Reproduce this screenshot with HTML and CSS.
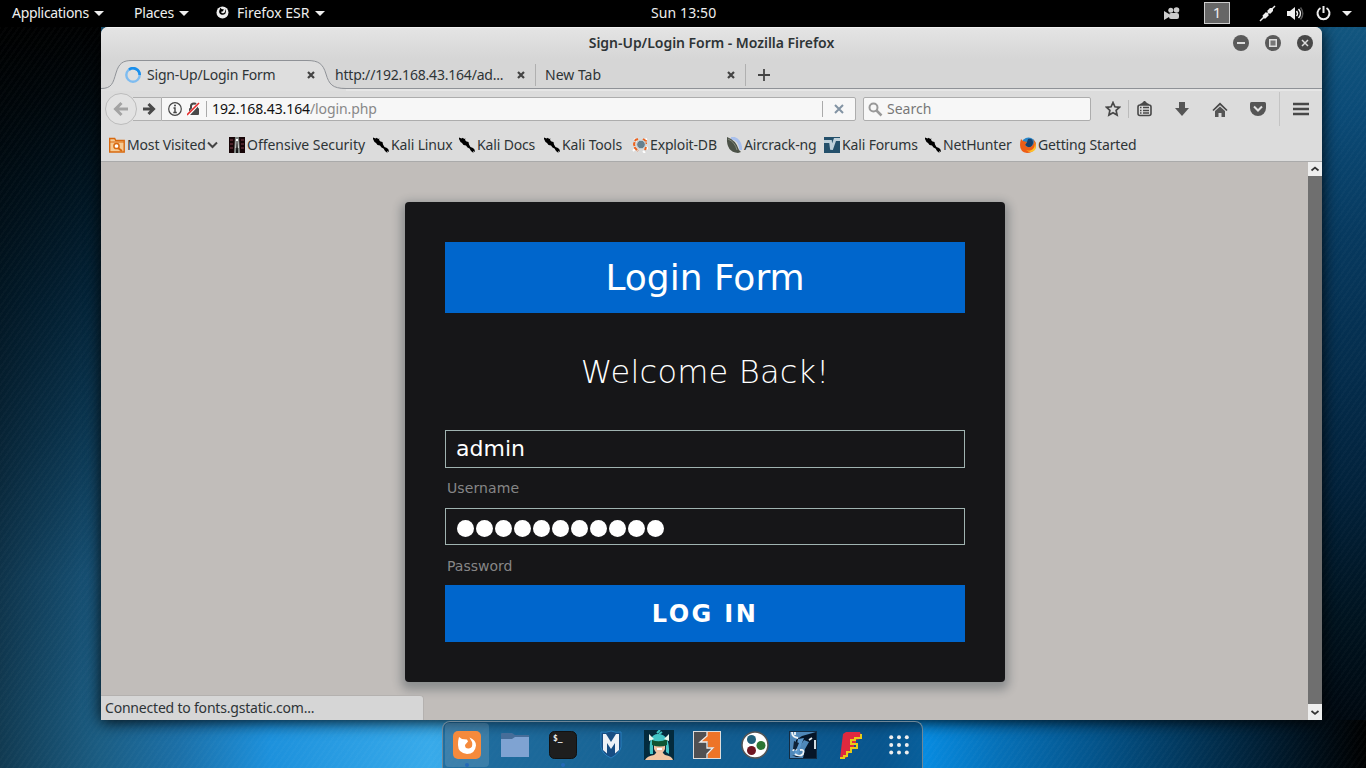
FILE: index.html
```html
<!DOCTYPE html>
<html lang="en">
<head>
<meta charset="utf-8">
<title>Sign-Up/Login Form</title>
<link rel="stylesheet" href="styles.css">
</head>
<body>
<svg width="0" height="0" class="defs">
  <defs>
    <symbol id="kali" viewBox="0 0 16 16"><path d="M0 .5l2.500 1L4 .8 5 2 6.500 1.500 6 3l1.500 1.500L9.500 5l.5 2.500L11.500 10l2.500 1 1.500 1.500.5 2.500-2-1 .5 2-2.500-2-1.500-2.500-2-1L7 8.500 4.500 8 3 6 1.500 5 0 2z" fill="#000"/></symbol>
    <symbol id="close" viewBox="0 0 8 8"><path d="M1 1l6 6M7 1L1 7" stroke="#444" stroke-width="2.200"/></symbol>
  </defs>
</svg>
<div class="desktop">
  <header class="panel">
    <span class="menu m-app">Applications<i class="tri"></i></span>
    <span class="menu m-places">Places<i class="tri"></i></span>
    <span class="menu m-fox"><svg width="13" height="13" viewBox="0 0 13 13"><circle cx="6.500" cy="6.500" r="6" fill="#eee"/><path d="M4.500 1.500l1 1.500 2.500.5-1.500 2-1.500.3q.8 2.200 3 1.200 2-1.500.8-4.500 2.200 2.500.7 5-2 2-4.500 1Q2.500 7 3.300 4.500z" fill="#000"/></svg><b>Firefox ESR</b><i class="tri"></i></span>
    <span class="clock">Sun 13:50</span>
    <div class="tray">
      <svg width="16" height="13" viewBox="0 0 16 13" fill="#ccc"><circle cx="6.800" cy="3.200" r="2.500"/><circle cx="12.500" cy="3" r="2.800"/><rect x="5" y="6" width="10" height="6" rx="2"/><path d="M0 4l5 3v3l-5 3z"/></svg>
      <span class="workspace">1</span>
      <svg class="t-net" width="17" height="17" viewBox="0 0 17 17"><path d="M1 16L16 1" stroke="#eee" stroke-width="1.500"/><path d="M3.500 10.500l3.500-3.500 3 3-3.500 3.500h-2zM8 6l3-3h3v3l-3 3z" fill="#eee"/></svg>
      <svg class="t-vol" width="17" height="15" viewBox="0 0 17 15"><path d="M0 5h3l5-4v13L3 10H0z" fill="#eee"/><path d="M9.500 5q2 2.500 0 5M11.500 3q4 4.500 0 9" fill="none" stroke="#eee" stroke-width="1.500"/><path d="M13.500 1.500q4.500 6 0 12" fill="none" stroke="#555" stroke-width="1.500"/></svg>
      <svg class="t-pow" width="15" height="16" viewBox="0 0 15 16"><path d="M4.500 3a6 6 0 1 0 6 0M7.500 1v7" fill="none" stroke="#eee" stroke-width="2"/></svg>
      <i class="tri"></i>
    </div>
  </header>

  <main class="window">
    <div class="titlebar">
      <span class="title">Sign-Up/Login Form - Mozilla Firefox</span>
      <div class="controls">
        <svg width="16" height="16" viewBox="0 0 16 16"><circle cx="8" cy="8" r="8" fill="#5a5a5a"/><path d="M4 8h8" stroke="#ddd" stroke-width="2"/></svg>
        <svg width="16" height="16" viewBox="0 0 16 16"><circle cx="8" cy="8" r="8" fill="#5a5a5a"/><rect x="4.750" y="4.750" width="6.500" height="6.500" fill="#777" stroke="#ddd" stroke-width="1.500"/></svg>
        <svg width="16" height="16" viewBox="0 0 16 16"><circle cx="8" cy="8" r="8" fill="#484848"/><path d="M5 5l6 6M11 5l-6 6" stroke="#ddd" stroke-width="1.500"/></svg>
      </div>
    </div>

    <div class="tabs">
      <div class="tab active">
        <svg class="tab-shape" width="245" height="32" viewBox="0 0 245 32"><path d="M0 31V29.500C11 29.500 12 24 15 14 18 4 22 1.500 31 1.500H206C218 1.500 222 5 225 15 228 25 231 29.500 245 29.500V32H0z" fill="#dedede"/><path d="M0 29.500C11 29.500 12 24 15 14 18 4 22 1.500 31 1.500H206C218 1.500 222 5 225 15 228 25 231 29.500 245 29.500" fill="none" stroke="#8f9297"/></svg>
        <svg class="spinner" width="16" height="16" viewBox="0 0 16 16"><circle cx="8" cy="8" r="6.700" fill="none" stroke="#7ebcf0" stroke-width="2.400"/><path d="M4 2.600A6.700 6.700 0 0 1 14.700 8" fill="none" stroke="#1a8fec" stroke-width="2.600"/></svg>
        <span class="tab-label l1">Sign-Up/Login Form</span><svg class="x x1" width="8" height="8"><use href="#close"/></svg>
      </div>
      <div class="tab second"><span class="tab-label l2">http://192.168.43.164/ad...</span><svg class="x" width="8" height="8"><use href="#close"/></svg></div>
      <div class="tab third"><span class="tab-label l3">New Tab</span><svg class="x" width="8" height="8"><use href="#close"/></svg></div>
      <svg class="plus" width="12" height="12" viewBox="0 0 12 12"><path d="M6 0v12M0 6h12" stroke="#444" stroke-width="1.800"/></svg>
    </div>

    <div class="navbar">
      <div class="back"><svg width="16" height="16" viewBox="0 0 16 16"><path d="M15 8H4M8.500 2L2.500 8l6 6" fill="none" stroke="#a3a3a3" stroke-width="3"/></svg></div>
      <div class="forward"><svg width="14" height="14" viewBox="0 0 14 14"><path d="M1 7h9M6.500 2l5 5-5 5" fill="none" stroke="#484848" stroke-width="3"/></svg></div>
      <div class="urlbox">
        <svg width="14" height="14" viewBox="0 0 14 14"><circle cx="7" cy="7" r="6.300" fill="none" stroke="#444" stroke-width="1.200"/><path d="M5.500 6H7v4.500M5.300 10.500h3.500" fill="none" stroke="#444" stroke-width="1.400"/><circle cx="7" cy="3.500" r="1" fill="#444"/></svg>
        <svg class="lock" width="13" height="14" viewBox="0 0 13 14"><rect x="2" y="6" width="10" height="7" rx="1" fill="#484848"/><path d="M4 7V4q0-2.500 3-2.500T10 4v3" fill="none" stroke="#484848" stroke-width="2"/><path d="M1 13L12 1" stroke="#fff" stroke-width="3"/><path d="M0 13L12 1" stroke="#e52c2c" stroke-width="1.600"/></svg>
        <i class="sep s1"></i><span class="url"><b>192.168.43.164</b>/login.php</span>
        <i class="sep s2"></i><svg class="stop" width="10" height="10" viewBox="0 0 10 10"><path d="M1 1l8 8M9 1L1 9" stroke="#8293a3" stroke-width="2"/></svg>
      </div>
      <div class="search"><svg width="15" height="15" viewBox="0 0 15 15"><circle cx="5.500" cy="5.500" r="4" fill="none" stroke="#999" stroke-width="2"/><path d="M8.500 8.500l5 5" stroke="#999" stroke-width="2.500"/></svg><span>Search</span></div>
      <div class="tools">
        <svg width="16" height="16" viewBox="0 0 16 16"><path d="M8 1.500l1.900 4.300 4.600.5-3.400 3.100 1 4.700L8 11.700l-4.100 2.400 1-4.700-3.400-3.100 4.600-.5z" fill="none" stroke="#484848" stroke-width="1.700"/></svg>
        <i class="toolsep"></i>
        <svg class="clip" width="15" height="16" viewBox="0 0 15 16"><path d="M3 4h9q2 0 2 2v6.500q0 2-2 2H3q-2 0-2-2V6q0-2 2-2z" fill="none" stroke="#484848" stroke-width="1.600"/><path d="M3 3l2-1 2-2h1l2 2 2 1v1H3z" fill="#484848"/><path d="M3 6.500h1.500M6 6.500h6M3 9.500h1.500M6 9.500h6M3 12h1.500M6 12h6" stroke="#484848" stroke-width="1.500"/></svg>
        <svg class="down" width="14" height="14" viewBox="0 0 14 14"><path d="M4 0h6v6h4L7 14 0 6h4z" fill="#555"/></svg>
        <svg class="home" width="16" height="15" viewBox="0 0 16 15"><path d="M1 8.500L8 1.800l7 6.700" fill="none" stroke="#484848" stroke-width="1.700"/><path d="M3 9l5-4.500L13 9v6H9.500v-4h-3v4H3z" fill="#555"/></svg>
        <svg class="pocket" width="16" height="14" viewBox="0 0 16 14"><path d="M1.500 0h13Q16 0 16 1.500V6a8 8 0 0 1-16 0V1.500Q0 0 1.500 0z" fill="#555"/><path d="M4 4.500l4 4 4-4" fill="none" stroke="#e2e2e2" stroke-width="2"/></svg>
        <i class="menusep"></i>
        <svg class="burger" width="16" height="14" viewBox="0 0 16 14"><path d="M0 2h16M0 7h16M0 12h16" stroke="#484848" stroke-width="2.600"/></svg>
      </div>
    </div>

    <nav class="bookmarks">
      <span class="bm"><svg width="16" height="16" viewBox="0 0 16 16"><path d="M.7 15V1.500h5l1 2h8.500V15z" fill="#f6ca93" stroke="#d8690f" stroke-width="1.400"/><path d="M1 5h14" stroke="#d8690f"/><circle cx="7.500" cy="9" r="2.600" fill="#fff" stroke="#d8690f" stroke-width="1.500"/><path d="M9 11l4 3" stroke="#d8690f" stroke-width="2"/></svg><b>Most Visited</b><svg class="chev" width="11" height="8" viewBox="0 0 11 8"><path d="M1 1.500l4.500 4.500L10 1.500" fill="none" stroke="#444" stroke-width="2"/></svg></span>
      <span class="bm offsec"><svg width="16" height="16" viewBox="0 0 16 16"><path d="M0 0h16v16H0z" fill="#170507"/><path d="M1 3h3M1 7h3M1 11h3M12 3h3M12 7h3M12 11h3" stroke="#4a2027" stroke-width="2"/><path d="M6 0h4l1 16H5z" fill="#7f8683"/><path d="M7 2h2l.7 9H6.500z" fill="#fff"/><path d="M7.500 4h1l.5 12H7z" fill="#111"/></svg><b>Offensive Security</b></span>
      <span class="bm"><svg width="16" height="16"><use href="#kali"/></svg><b>Kali Linux</b></span>
      <span class="bm"><svg width="16" height="16"><use href="#kali"/></svg><b>Kali Docs</b></span>
      <span class="bm"><svg width="16" height="16"><use href="#kali"/></svg><b>Kali Tools</b></span>
      <span class="bm"><svg width="16" height="16" viewBox="0 0 16 16"><path d="M2 2l3 2M13 3l2-1M1 14l3-3M14 10l2 2M11 14l2 2" stroke="#fff" stroke-width="2"/><path d="M6 2L3.500 3 2 7l1 4 3 3M11 2l3 2v3M14 10l-1 3" fill="none" stroke="#ed6420" stroke-width="2" stroke-dasharray="4 1"/><circle cx="9" cy="7.500" r="4.300" fill="#66808f" stroke="#cdd8de"/></svg><b>Exploit-DB</b></span>
      <span class="bm"><svg width="16" height="16" viewBox="0 0 16 16"><path d="M5 1q9 0 10 12" fill="none" stroke="#a9c0ed" stroke-width="3"/><path d="M1 0q9 3 12 13l2 2-3 1Q0 15 1 0z" fill="#4c5248"/><path d="M2 2q7 3 9 11" fill="none" stroke="#858b7d"/></svg><b>Aircrack-ng</b></span>
      <span class="bm"><svg width="16" height="16" viewBox="0 0 16 16"><path d="M0 0h16v16H0z" fill="#24506b"/><path d="M0 4.500h6.500l1 8L11 2.500h5" fill="none" stroke="#bed0da" stroke-width="2.800"/></svg><b>Kali Forums</b></span>
      <span class="bm"><svg width="16" height="16"><use href="#kali"/></svg><b>NetHunter</b></span>
      <span class="bm"><svg width="16" height="16" viewBox="0 0 16 16"><circle cx="8.500" cy="7.500" r="7" fill="#2987c9"/><path d="M8 2q5-1 5 4-1 5-5 4L5 8l2-3z" fill="#16416e"/><path d="M1 2l2 2 4 1-2 3q3 4 7 1 3-3 1-7 5 5 2 10-3 4-8 4Q0 15 0 8q0-3 1-6z" fill="#ee5d16"/><path d="M14 4q2 5-1 8-3 3-7 1 5 4 9 0 2-4-1-9z" fill="#ffc528"/></svg><b>Getting Started</b></span>
    </nav>

    <section class="viewport">
      <div class="page">
        <form class="card">
          <h1>Login Form</h1>
          <h2>Welcome Back!</h2>
          <div class="field user">admin</div>
          <label>Username</label>
          <div class="field pass"><i></i><i></i><i></i><i></i><i></i><i></i><i></i><i></i><i></i><i></i><i></i></div>
          <label class="pass-label">Password</label>
          <div class="submit">LOG IN</div>
        </form>
        <div class="status"><span>Connected to fonts.gstatic.com...</span></div>
      </div>
      <div class="scrollbar">
        <svg width="14" height="14" viewBox="0 0 14 14"><path d="M3.500 8.500L7 5.500l3.500 3" fill="none" stroke="#333" stroke-width="1.700"/></svg>
        <svg width="14" height="16" viewBox="0 0 14 16"><path d="M3.500 7L7 10l3.500-3" fill="none" stroke="#333" stroke-width="1.700"/></svg>
      </div>
    </section>
  </main>

  <footer class="dock">
    <div class="app current running"><svg width="28" height="28" viewBox="0 0 28 28"><rect width="28" height="28" rx="5" fill="#f58a3c"/><path d="M6 6l3 2 5 .5 1 2-3 3.500q0 4 4 3.500 4.500-1 3-6.500l-2.500-4.500Q23 9 23 14.500 22 23 14 23 5 22 5 14q0-5 1-8z" fill="#fff"/></svg></div>
    <div class="app"><svg width="28" height="26" viewBox="0 0 28 26"><path d="M0 2q0-1 1-1h10l3 2h14v8H0z" fill="#466d99"/><path d="M0 7h11l3-2h14v20H0z" fill="#7fa3d2"/></svg></div>
    <div class="app running"><svg width="28" height="28" viewBox="0 0 28 28"><rect x=".5" y=".5" width="27" height="27" rx="5" fill="#1e1e1e" stroke="#111"/><text x="4" y="10" class="prompt">$_</text></svg></div>
    <div class="app"><svg width="24" height="30" viewBox="0 0 24 30"><path d="M12 1q5 2 10 1v15q-1 6-10 11Q3 24 2 17V2q5 1 10-1z" fill="#174d83" stroke="#287fbd"/><path d="M4 20V4l3 0 5 8 5-8h3v16l-4 3.500V13l-4 6-4-6v10.500z" fill="#edf1f6"/></svg></div>
    <div class="app"><svg width="30" height="30" viewBox="0 0 30 30"><path d="M0 0h30v30H0z" fill="#042b3d"/><path d="M6 24Q4 4 14 4q12 0 11 20l-3-2V12H9v12z" fill="#43c5c6"/><path d="M10 12h11v7q-2 5-5.500 5T10 19z" fill="#efc0a2"/><path d="M8 10q8 3 15-1v6q-7 3-15 0z" fill="#0e5433"/><path d="M5 11V4l5 5M25 11V4l-5 5" fill="#e8f4e8"/><path d="M1 30q2-4 9-5l3-3h5l3 3q7 1 8 5z" fill="#f2c6a3"/><path d="M13 18h5v2h-5z" fill="#fff"/><path d="M13 3l3-3M15 4l3-2" stroke="#43c5c6" stroke-width="2"/></svg></div>
    <div class="app"><svg width="28" height="28" viewBox="0 0 28 28"><rect x=".5" y=".5" width="27" height="27" fill="#ed7428" stroke="#ddd"/><path d="M1 1h13v4l-7 6h8v5l6 1-6 5v5H1z" fill="#505052"/><path d="M14 1v4l-7 6h7v6h6l-6 6v4" fill="none" stroke="#eee" stroke-width="1.300"/></svg></div>
    <div class="app"><svg width="28" height="28" viewBox="0 0 28 28"><circle cx="14" cy="14" r="13" fill="#fff" stroke="#555" stroke-width="1.500"/><circle cx="10.500" cy="8.500" r="4.500" fill="#20617c"/><circle cx="20" cy="14.500" r="4.500" fill="#2b7534"/><circle cx="10.500" cy="19.500" r="4.500" fill="#701622"/></svg></div>
    <div class="app"><svg width="28" height="28" viewBox="0 0 28 28"><rect x=".5" y=".5" width="27" height="27" fill="#4f88b9" stroke="#122c44"/><path d="M13 5l14-4v26H14l2-9 4-7-5-2-6 9-2 3V9z" fill="#061527"/><path d="M9 8l6-1-4 10-2 8-4-2 2-6z" fill="#5c98cc"/><path d="M3 1q0 5 6 6M6 1v3M4 20q1-3 4-1M11 19q5-1 3 4-4 4-8 0M20 9l3-2M26 9v9" fill="none" stroke="#edf3f6" stroke-width="1.800"/><path d="M5 10l5 2-3 7-3-1zM3 24l4 2h6" fill="#102338"/></svg></div>
    <div class="app"><svg width="26" height="28" viewBox="0 0 26 28"><path d="M8 1h14l1 3-1 4-4 1v4l-2 1v4l-4 1-2 5-2 3H2L5 3z" fill="#df293f"/><path d="M23 3v4h-6v2h-4v4h6v4h-6v4h-4v4H6v2H2" fill="none" stroke="#e7cb17" stroke-width="2"/></svg></div>
    <div class="app"><svg width="20" height="20" viewBox="0 0 20 20" fill="#eee"><circle cx="2.200" cy="2.200" r="2"/><circle cx="10" cy="2.200" r="2"/><circle cx="17.800" cy="2.200" r="2"/><circle cx="2.200" cy="10" r="2"/><circle cx="10" cy="10" r="2"/><circle cx="17.800" cy="10" r="2"/><circle cx="2.200" cy="17.500" r="2"/><circle cx="10" cy="17.500" r="2"/><circle cx="17.800" cy="17.500" r="2"/></svg></div>
  </footer>
</div>
</body>
</html>
```
FILE: styles.css
```css
* { box-sizing: border-box; }
body { margin: 0; font: 14px/20px "Noto Sans", sans-serif; color: #2e3436; overflow: hidden; }
b { font-weight: 400; }
svg { display: block; flex: none; }
.defs { position: absolute; }
.desktop {
  width: 1366px; height: 768px; display: flex; flex-direction: column; overflow: hidden;
  background:
    repeating-linear-gradient(125deg, rgba(255,255,255,.018) 0 2px, transparent 2px 5px),
    linear-gradient(90deg, rgba(0,0,0,.38), transparent 100px) no-repeat,
    linear-gradient(90deg, #1b5d83 101px, #1c70a8 180px, #1d91dc 270px, #38aaea 430px, #248fcf 650px, #0878c6 880px, #078be0 925px, #0670b7 1000px, #04568e 1090px, #023355 1200px, #001321 1300px, #000 1366px) 0 720px / 1366px 48px no-repeat,
    linear-gradient(180deg, #12567f 27px, #0b4b77 110px, #073a60 230px, #042c4b 380px, #02223b 490px, #00131f 620px, #000810 720px) 1322px 0 / 44px 720px no-repeat,
    linear-gradient(175deg, #000 27px, #00080d 100px, #00131f 180px, #032439 300px, #0b3854 430px, #175378 580px, #1b5d83 720px) 0 0 / 101px 720px no-repeat,
    #1b5d83;
}
.panel { height: 27px; flex: none; display: flex; align-items: center; background: #000; color: #eee; position: relative; padding: 0 0 1px 12px; }
.menu { display: flex; align-items: center; height: 26px; line-height: 18px; padding-bottom: 1px; }
.tri { width: 0; height: 0; border: 5px solid transparent; border-top-color: #eee; border-bottom: 0; margin: 1px 0 0 5px; }
.m-app { width: 122px; letter-spacing: -.3px; }
.m-places { width: 82px; letter-spacing: -.2px; }
.m-fox b { margin-left: 8px; letter-spacing: 0; }
.clock { margin-left: auto; margin-right: 513px; width: 202px; white-space: nowrap; letter-spacing: .1px; height: 21px; }
.tray { position: absolute; right: 14px; top: 0; height: 26px; display: flex; align-items: center; }
.workspace { width: 26px; height: 22px; margin: 0 29px 0 24px; border: 1px solid #ccc; background: #666; text-align: center; font-size: 15px; line-height: 19px; }
.t-vol { margin-left: 11px; }
.t-pow { margin-left: 12px; }
.tray .tri { margin-left: 11px; }

.window { width: 1221px; height: 693px; flex: none; margin-left: 101px; border-radius: 7px 7px 0 0; overflow: hidden; background: #dcdcdc; display: flex; flex-direction: column; box-shadow: 0 2px 16px rgba(0,0,0,.9); }
.titlebar { height: 32px; flex: none; position: relative; background: linear-gradient(#e4e4e4, #d6d6d6); text-align: center; border-top: 1px solid #f3f3f3; }
.title { font-weight: 600; letter-spacing: -.03px; line-height: 30px; }
.controls { position: absolute; right: 9px; top: 7px; display: flex; gap: 16px; }
.tabs { height: 32px; flex: none; display: flex; align-items: center; background: linear-gradient(transparent 29px, #8f9297 29px, #8f9297 30px, #e6e6e6 30px), #d6d6d6; }
.tab { height: 32px; display: flex; align-items: center; position: relative; }
.tab-label { white-space: nowrap; letter-spacing: -.2px; height: 20px; }
.active { width: 234px; padding-left: 24px; }
.tab-shape { position: absolute; left: 0; top: 0; z-index: 0; }
.spinner, .active .tab-label, .active .x { position: relative; }
.l1 { margin-left: 6px; width: 160px; }
.second { width: 201px; background: linear-gradient(#b0b0b0, #b0b0b0) 200px 5px / 1px 22px no-repeat; }
.l2 { width: 182px; }
.third { width: 210px; padding-left: 9px; background: linear-gradient(#b0b0b0, #b0b0b0) 209px 5px / 1px 22px no-repeat; }
.l3 { width: 182px; letter-spacing: 0; }
.plus { margin-left: 12px; }

.navbar { height: 36px; flex: none; display: flex; align-items: center; padding-left: 4px; }
.back { width: 32px; height: 32px; flex: none; border: 1px solid #bcbcbc; border-radius: 50%; display: grid; place-items: center; background: #e2e2e2; position: relative; }
.forward { width: 28px; height: 24px; margin-left: -4px; border: 1px solid #b0b0b0; border-width: 1px 0; background: #e4e4e4; padding: 4px 0 4px 9px; }
.urlbox { width: 695px; height: 24px; border: 1px solid #adadad; border-radius: 0 2px 2px 0; background: #f7f7f7; display: flex; align-items: center; padding-left: 6px; }
.lock { margin-left: 5px; }
.sep { width: 1px; height: 16px; background: #aaa; }
.s1 { margin-left: 6px; }
.url { width: 610px; margin-left: 5px; color: #888; letter-spacing: -.1px; }
.url b { color: #111; }
.stop { margin-left: 11px; }
.search { width: 228px; height: 24px; margin-left: 7px; border: 1px solid #adadad; border-radius: 2px; background: #f7f7f7; display: flex; align-items: center; padding-left: 4px; color: #777; }
.search span { margin-left: 4px; letter-spacing: 0; }
.tools { display: flex; align-items: center; margin-left: 14px; }
.toolsep { width: 1px; height: 18px; margin-left: 7px; background: #bbb; }
.clip { margin-left: 8px; }
.down { margin-left: 23px; }
.home { margin-left: 23px; }
.pocket { margin-left: 22px; }
.menusep { width: 1px; height: 34px; margin-left: 13px; background: #c4c4c4; }
.burger { margin-left: 13px; }
.bookmarks { height: 34px; flex: none; display: grid; grid-template-columns: 120px 144px 86px 85px 88px 94px 98px 101px 95px 130px; align-items: center; padding: 2px 0 0 8px; }
.bm { display: flex; align-items: center; gap: 2px; white-space: nowrap; letter-spacing: -.15px; }
.offsec { letter-spacing: -.03px; }
.chev { margin-left: -1px; }

.viewport { flex: 1; display: flex; min-height: 0; border-top: 1px solid #aaa; }
.page { width: 1207px; background: #c1bdba; position: relative; padding: 40px 0 0 304px; overflow: hidden; }
.card { width: 600px; height: 480px; padding: 40px; background: #161618; border-radius: 4px; box-shadow: 0 4px 10px 4px rgba(19,35,47,.3); font-family: "DejaVu Sans", sans-serif; color: #fff; }
h1 { margin: 0 0 39px; height: 71px; background: #0066cc; text-align: center; font-size: 36px; font-weight: 400; line-height: 71px; }
h2 { margin: 0; height: 78px; text-align: center; font-size: 32px; font-family: "DejaVu Sans Light", "DejaVu Sans", sans-serif; font-weight: 200; line-height: 40px; letter-spacing: .2px; }
.field { height: 38px; border: 1px solid #a0b3b0; padding-left: 10px; font-size: 22px; line-height: 35px; }
label { display: block; height: 40px; padding-left: 2px; color: #868687; font-size: 14px; line-height: 40px; letter-spacing: .1px; }
.pass { height: 37px; display: flex; gap: 2px; padding: 11px 0 0 11px; }
.pass i { width: 17px; height: 17px; border-radius: 50%; background: #fff; }
.pass-label { line-height: 42px; letter-spacing: 0; }
.submit { height: 57px; background: #0066cc; text-align: center; font-weight: 700; font-size: 24px; line-height: 58px; letter-spacing: 2.400px; }
.status { position: absolute; left: 0; bottom: 0; width: 323px; height: 25px; background: #d6d6d6; border: 1px solid #b4b1af; border-width: 1px 1px 0 0; border-radius: 0 4px 0 0; padding-left: 4px; line-height: 23px; }
.status span { letter-spacing: -.2px; }
.scrollbar { width: 14px; background: #6f6f6f; display: flex; flex-direction: column; justify-content: space-between; }
.scrollbar svg { background: #eee; }

.dock { width: 481px; height: 47px; margin: 1px 0 0 442px; flex: none; display: flex; gap: 4px; padding: 1px 2px 0; border: 1px solid #6f8797; border-bottom: 0; border-radius: 8px 8px 0 0; background: rgba(8,48,82,.48); }
.app { width: 44px; height: 44px; display: grid; place-items: center; border-radius: 4px; position: relative; flex: none; }
.current { background: rgba(255,255,255,.13); }
.running::after { content: ""; position: absolute; left: 20px; bottom: 0; width: 4px; height: 4px; border-radius: 50%; background: #2469b8; }
.prompt { font: 700 8px "DejaVu Sans Mono", monospace; fill: #eee; }
```
